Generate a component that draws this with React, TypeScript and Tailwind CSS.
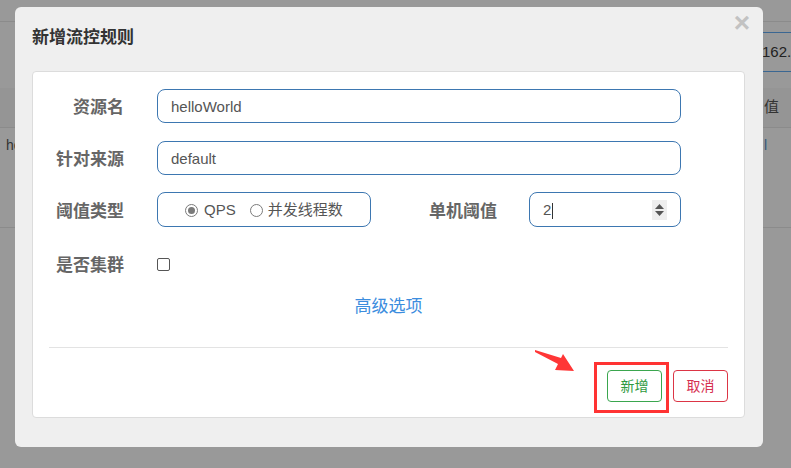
import React from 'react';

const font = { fontFamily: '"Liberation Sans", "Noto Sans CJK SC", sans-serif' };

function Radio({ checked }: { checked?: boolean }) {
  return (
    <span className="flex h-[13px] w-[13px] items-center justify-center rounded-full border border-[#7b7b7b] bg-white">
      {checked && <span className="h-[7px] w-[7px] rounded-full bg-[#7a7a7a]" />}
    </span>
  );
}

function Label({ text, className = '' }: { text: string; className?: string }) {
  return (
    <div className={`pt-[4px] text-right text-[17px] font-bold text-[#666] ${className}`}>{text}</div>
  );
}

export default function App() {
  return (
    <div className="relative h-[468px] w-[791px] overflow-hidden bg-[#999]" style={font}>
      {/* page behind the backdrop */}
      <div className="h-[22px] border-b border-[#8b8b8b]" />
      <div className="flex h-[66px] justify-end">
        <div className="mt-[10px] h-[40px] w-[41px] border-y border-[#3b6792] pl-[12px] text-[15px] leading-[38px] text-[#222]">
          162.
        </div>
      </div>
      <div className="flex h-[40px] items-center justify-end border-b border-[#8b8b8b] bg-[#959595] pr-[12px] text-[15px] text-[#333]">
        值
      </div>
      <div className="flex h-[100px] items-start justify-between border-b border-[#8b8b8b] pt-[7px] text-[14px]">
        <span className="pl-[6px] text-[#333]">he</span>
        <span className="pr-[24px] text-[#36577a]">l</span>
      </div>

      {/* modal */}
      <div className="absolute left-[15px] top-[7px] flex h-[440px] w-[748px] flex-col rounded-[6px] bg-[#efefef]">
        <div className="flex h-[64px] justify-between pl-[17px] pr-[13px]">
          <div className="mt-[20px] text-[17px] font-bold leading-[22px] text-[#333]">新增流控规则</div>
          <div className="mt-[2px] text-[28px] font-bold leading-[28px] text-[#c2c2c2]">×</div>
        </div>

        <div className="ml-[17px] h-[347px] w-[713px] rounded-[4px] border border-[#dcdcdc] bg-white">
          <div className="pt-[17px]">
            {/* 资源名 */}
            <div className="flex h-[34px] items-center">
              <Label text="资源名" className="w-[91px]" />
              <div className="ml-[33px] flex h-[34px] w-[524px] items-center rounded-[8px] border border-[#3d77b1] pl-[13px] pt-[2px] text-[15px] text-[#555]">
                helloWorld
              </div>
            </div>

            {/* 针对来源 */}
            <div className="mt-[18px] flex h-[34px] items-center">
              <Label text="针对来源" className="w-[91px]" />
              <div className="ml-[33px] flex h-[34px] w-[524px] items-center rounded-[8px] border border-[#3d77b1] pl-[13px] pt-[2px] text-[15px] text-[#555]">
                default
              </div>
            </div>

            {/* 阈值类型 / 单机阈值 */}
            <div className="mt-[17px] flex h-[35px] items-center">
              <Label text="阈值类型" className="w-[91px]" />
              <div className="ml-[33px] flex h-[35px] w-[214px] items-center rounded-[8px] border border-[#3d77b1] pl-[27px] pt-[2px] text-[15px] text-[#555]">
                <Radio checked />
                <span className="ml-[6px]">QPS</span>
                <span className="ml-[14px]">
                  <Radio />
                </span>
                <span className="ml-[5px]">并发线程数</span>
              </div>
              <Label text="单机阈值" className="w-[126px]" />
              <div className="ml-[32px] flex h-[35px] w-[152px] items-center rounded-[8px] border border-[#3d77b1] pl-[13px] pr-[13px] text-[15px] text-[#555]">
                <span className="pt-[2px]">2</span>
                <span className="ml-[1px] mt-[2px] h-[16px] w-px bg-[#333]" />
                <div className="ml-auto flex h-[20px] w-[15px] flex-col items-center justify-center gap-[2px] bg-[#eee]">
                  <svg width="9" height="5" viewBox="0 0 9 5">
                    <path d="M0 5 L4.5 0 L9 5 Z" fill="#555" />
                  </svg>
                  <svg width="9" height="5" viewBox="0 0 9 5">
                    <path d="M0 0 L9 0 L4.5 5 Z" fill="#555" />
                  </svg>
                </div>
              </div>
            </div>

            {/* 是否集群 */}
            <div className="mt-[20px] flex h-[34px] items-center">
              <Label text="是否集群" className="w-[91px]" />
              <span className="ml-[33px] h-[13px] w-[13px] rounded-[2px] border border-[#555] bg-white" />
            </div>

            <div className="mt-[14px] text-center text-[17px] leading-[24px] text-[#3c8dde]">高级选项</div>
          </div>

          <div className="mx-[16px] mt-[28px] border-t border-[#e3e3e3]" />

          <div className="relative flex justify-end gap-[11px] pr-[16px] pt-[22px]">
            <svg className="absolute left-[497px] top-[-3px]" width="50" height="30" viewBox="0 0 50 30">
              <path d="M5 5 L31 13 L33 9 L44 26 L25 25 L28 19 L5 7 Z" fill="#ff3636" />
            </svg>
            <div className="relative">
              <span className="absolute left-[-13px] top-[-8px] h-[51px] w-[75px] border-[3px] border-[#ff3333]" />
              <button className="h-[32px] w-[55px] rounded-[4px] border border-[#3aa64e] bg-white text-[14px] text-[#2f9a40]">
                新增
              </button>
            </div>
            <button className="h-[32px] w-[55px] rounded-[4px] border border-[#dc3545] bg-white text-[14px] text-[#d63050]">
              取消
            </button>
          </div>
        </div>
      </div>
    </div>
  );
}
